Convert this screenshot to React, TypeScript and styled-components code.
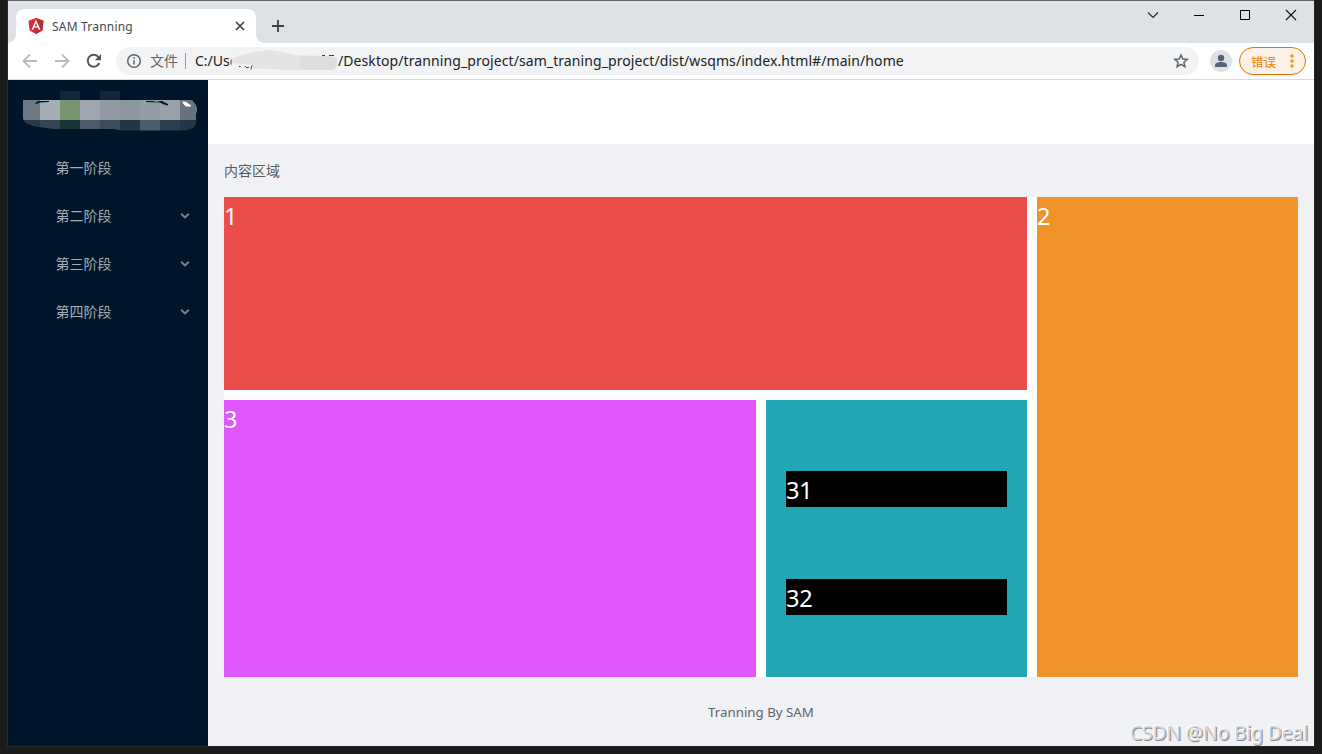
import React from "react";
import styled, { createGlobalStyle } from "styled-components";

const Global = createGlobalStyle`
  * { box-sizing: border-box; }
  html, body { margin: 0; height: 754px; overflow: hidden; background: #1b1b1b; }
  body { font-family: "Noto Sans", "Noto Sans CJK SC", sans-serif; }
`;

const Desktop = styled.div`
  position: relative;
  width: 1322px;
  height: 754px;
  padding: 0 8px 8px;
  background: #1b1b1b;
`;
const Window = styled.div`
  height: 746px;
  border-top: 1px solid #636467;
  display: flex;
  flex-direction: column;
  background: #fff;
  box-shadow: 0 0 0 1px #272727;
`;
const TabStrip = styled.header`
  height: 42px;
  flex: none;
  display: flex;
  background: #dee1e6;
`;
const Tab = styled.div`
  position: relative;
  width: 240px;
  height: 34px;
  margin: 8px 0 0 8px;
  padding: 0 10px 0 11px;
  display: flex;
  align-items: center;
  background: #fff;
  border-radius: 8px 8px 0 0;
  &::before, &::after {
    content: "";
    position: absolute;
    bottom: 0;
    width: 8px;
    height: 8px;
  }
  &::before { left: -8px; background: radial-gradient(circle at 0 0, transparent 7.5px, #fff 8px); }
  &::after { right: -8px; background: radial-gradient(circle at 100% 0, transparent 7.5px, #fff 8px); }
`;
const TabTitle = styled.span`
  flex: 1;
  margin: 2px 0 0 7px;
  font-size: 12px;
  letter-spacing: 0.2px;
  line-height: 18px;
  color: #45494d;
`;
const NewTab = styled.div`
  margin: 18px 0 0 16px;
  height: 14px;
  line-height: 0;
`;
const WindowControls = styled.div`
  margin: 8px 17px 0 auto;
  height: 12px;
  display: flex;
  gap: 34px;
`;
const Toolbar = styled.div`
  height: 37px;
  flex: none;
  display: flex;
  align-items: center;
  padding: 0 8px 0 14px;
  border-bottom: 1px solid #d9dadb;
  background: #fff;
`;
const NavButtons = styled.div`
  display: flex;
  gap: 16px;
  margin-right: 14px;
  line-height: 0;
`;
const AddressBar = styled.div`
  position: relative;
  width: 1083px;
  height: 28px;
  padding: 0 10px;
  display: flex;
  align-items: center;
  border-radius: 14px;
  background: #f1f3f4;
  font-size: 14px;
  line-height: 20px;
  white-space: nowrap;
  color: #202124;
`;
const Scheme = styled.span`
  width: 36px;
  margin-left: 8px;
  border-right: 1px solid #9a9da1;
  height: 16px;
  line-height: 16px;
  color: #5f6368;
`;
const UrlStart = styled.span`
  width: 143px;
  margin-left: 9px;
`;
const UrlRest = styled.span`
  flex: 1;
  letter-spacing: 0.085px;
`;
const UrlMask = styled.svg`
  position: absolute;
  left: 114px;
  top: 2px;
`;
const Avatar = styled.div`
  width: 22px;
  height: 22px;
  margin: 0 7px 0 11px;
  border-radius: 50%;
  background: #dee1e6;
  line-height: 0;
`;
const ErrorPill = styled.div`
  width: 67px;
  height: 28px;
  padding: 0 11px 0 11px;
  display: flex;
  align-items: center;
  justify-content: space-between;
  border: 1px solid #e37400;
  border-radius: 14px;
  background: #fcf1e8;
  color: #ea8000;
  font-size: 12.5px;
`;
const Page = styled.div`
  flex: 1;
  display: flex;
  min-height: 0;
`;
const Sidebar = styled.aside`
  width: 200px;
  background: #001529;
`;
const Brand = styled.div`
  height: 64px;
  line-height: 0;
`;
const Menu = styled.nav`
  display: flex;
  flex-direction: column;
  gap: 8px;
  padding-top: 4px;
`;
const MenuItem = styled.div`
  height: 40px;
  padding: 0 18px 0 47.5px;
  display: flex;
  align-items: center;
  justify-content: space-between;
  font-size: 14px;
  line-height: 20px;
  color: #a6adb4;
`;
const Main = styled.main`
  flex: 1;
  display: flex;
  flex-direction: column;
  background: #f0f1f5;
`;
const PageHeader = styled.div`
  height: 64px;
  background: #fff;
`;
const Content = styled.section`
  padding: 0 16px;
`;
const ContentTitle = styled.div`
  height: 53px;
  line-height: 53px;
  font-size: 14px;
  color: #595b5e;
`;
const Board = styled.div`
  display: grid;
  grid-template-columns: 532px 261px 261px;
  grid-template-rows: 193px 277px;
  gap: 10px;
  background: #fff;
  color: #fff;
  font-size: 23.5px;
  letter-spacing: -0.3px;
  line-height: 39px;
`;
const Tile = styled.div<{ $color: string; $wide?: boolean; $tall?: boolean }>`
  background: ${(p) => p.$color};
  grid-column: ${(p) => (p.$wide ? "span 2" : "auto")};
  grid-row: ${(p) => (p.$tall ? "span 2" : "auto")};
`;
const NestedTile = styled(Tile)`
  display: flex;
  flex-direction: column;
  gap: 72px;
  padding: 71px 20px 0;
`;
const Bar = styled.div`
  height: 36px;
  background: #000;
`;
const Footer = styled.footer`
  margin-top: 24px;
  text-align: center;
  font-size: 13.3px;
  line-height: 22px;
  color: #626467;
`;
const Watermark = styled.div`
  position: absolute;
  right: 14px;
  bottom: 7px;
  font-size: 19.5px;
  letter-spacing: -0.25px;
  line-height: 28px;
  white-space: nowrap;
  color: #d2d2d4;
  text-shadow: -1px -1px 0 #fff, 1px 1px 0 #8a8a8a;
`;

const AngularLogo = () => (
  <svg width="18" height="18" viewBox="0 0 18 18">
    <path d="M9 1 16.5 3.7 15.4 13.5 9 17 2.6 13.5 1.5 3.7Z" fill="#dd2b37" />
    <path d="M9 1 16.5 3.7 15.4 13.5 9 17Z" fill="#b52e31" />
    <path d="M9 2.8 4.5 12.8h1.7l.9-2.2h3.8l.9 2.2h1.7ZM9 6l1.3 3.2H7.7Z" fill="#fff" fillRule="evenodd" />
  </svg>
);

const Chevron = () => (
  <svg width="10" height="8" viewBox="0 0 10 8" fill="none" stroke="#77828d" strokeWidth="2">
    <path d="M1.2 1.7 5 5.4 8.8 1.7" />
  </svg>
);

const topRow = ["#6c7883", "#a5adb7", "#78936f", "#9ea7b0", "#919aa4", "#8a979f", "#929ca5", "#98a1aa", "#67747f"];
const bottomRow = ["#293a4a", "#344554", "#1a3337", "#4d5b69", "#3d4e5b", "#233648", "#4d5c69", "#2b3e4d", "#243648"];

const BrandMosaic = () => (
  <svg width="200" height="64" viewBox="0 0 200 64">
    <defs>
      <clipPath id="brush">
        <path d="M15 20H184L188 25 189 28V32L188 33V44L185 48 178 50.6H114L105 49H45L31 47 25 46 18 43 15 39Z" />
      </clipPath>
    </defs>
    <path d="M52 11h20v9H52zM92 11h20v9H92z" fill="#132638" />
    <g clipPath="url(#brush)" shapeRendering="crispEdges">
      {topRow.map((c, i) => (
        <rect key={i} x={12 + i * 20} y="20" width="20" height="20" fill={c} />
      ))}
      {bottomRow.map((c, i) => (
        <rect key={i} x={12 + i * 20} y="40" width="20" height="11" fill={c} />
      ))}
    </g>
    <path d="M27 23.5 30 21h11v1l-9 .5-4 1.5zM138 21h16l6 3v1.500l-4-1-4-2-14-.5z" fill="#001529" />
    <path d="M144 22l5-.6 3 .6zM174.500 21.500l3.500.3 5 3.700v1h-5l-3-3z" fill="#fff" />
  </svg>
);

const stages = [
  { label: "第一阶段", nested: false },
  { label: "第二阶段", nested: true },
  { label: "第三阶段", nested: true },
  { label: "第四阶段", nested: true },
];

const arrow = "M15 8H2M8 1.500 1.500 8 8 14.500";

export default function App() {
  return (
    <Desktop>
      <Global />
      <Window>
        <TabStrip>
          <Tab>
            <AngularLogo />
            <TabTitle>SAM Tranning</TabTitle>
            <svg width="12" height="12" viewBox="0 0 12 12" stroke="#3c4043" strokeWidth="1.7">
              <path d="M2 2 10 10M10 2 2 10" />
            </svg>
          </Tab>
          <NewTab>
            <svg width="12" height="14" viewBox="0 0 12 14" stroke="#3c4043" strokeWidth="1.8">
              <path d="M6 1V13M0 7H12" />
            </svg>
          </NewTab>
          <WindowControls>
            <svg width="12" height="12" viewBox="0 0 12 12" fill="none" stroke="#222" strokeWidth="1.100">
              <path d="M1 3.500 6 8.500 11 3.500" />
            </svg>
            <svg width="12" height="12" viewBox="0 0 12 12" stroke="#000">
              <path d="M1 6.500H11" />
            </svg>
            <svg width="12" height="12" viewBox="0 0 12 12" fill="none" stroke="#000">
              <path d="M1.500 1.500H10.500V10.500H1.500Z" />
            </svg>
            <svg width="12" height="12" viewBox="0 0 12 12" stroke="#111" strokeWidth="1.100">
              <path d="M1 1 11 11M11 1 1 11" />
            </svg>
          </WindowControls>
        </TabStrip>
        <Toolbar>
          <NavButtons>
            <svg width="16" height="16" viewBox="0 0 16 16" fill="none" stroke="#b9bbbd" strokeWidth="1.800">
              <path d={arrow} />
            </svg>
            <svg width="16" height="16" viewBox="0 0 16 16" fill="none" stroke="#b9bbbd" strokeWidth="1.800">
              <path d={arrow} transform="translate(16 0) scale(-1 1)" />
            </svg>
            <svg width="16" height="16" viewBox="0 0 16 16">
              <path d="M13.300 10A6 6 0 1 1 12.300 3.800L14 5.500" fill="none" stroke="#55585c" strokeWidth="2" />
              <path d="M15 1V7.200H8.800Z" fill="#55585c" />
            </svg>
          </NavButtons>
          <AddressBar>
            <svg width="16" height="16" viewBox="0 0 16 16" fill="none" stroke="#5f6368" strokeWidth="1.500">
              <circle cx="8" cy="8" r="6.300" />
              <path d="M8 7.200V11.500M8 4.300V6" />
            </svg>
            <Scheme>文件</Scheme>
            <UrlStart>C:/Users/</UrlStart>
            <UrlRest>/Desktop/tranning_project/sam_traning_project/dist/wsqms/index.html#/main/home</UrlRest>
            <UrlMask width="110" height="24" viewBox="0 0 110 24">
              <path d="M1.500 2H40V22H1.500Z" fill="#f1f3f4" />
              <path d="M2 10 12 6 24 3 40 1 52 3 64 6 98 7 107 9 107 16 104 21H60L38 20H24L22 16 12 15 2 14Z" fill="#e3e4e6" />
              <path d="M70 7H98L107 9V16L104 21H70Z" fill="#dddee0" />
              <path d="M9 17.500h1.500M15 17l2 2 2-1M22 16.500 20.800 20.500M92 6.500h3M99 6.500h5" stroke="#3c4043" fill="none" />
            </UrlMask>
            <svg width="16" height="16" viewBox="0 0 16 16" fill="none" stroke="#5f6368" strokeWidth="1.500">
              <path d="M8 2 9.800 6 14.200 6.400 10.900 9.300 11.900 13.600 8 11.300 4.100 13.600 5.100 9.300 1.800 6.400 6.200 6Z" />
            </svg>
          </AddressBar>
          <Avatar>
            <svg width="22" height="22" viewBox="0 0 22 22" fill="#556379">
              <circle cx="11" cy="8" r="3.200" />
              <path d="M5 17V15C5 12.800 9 12 11 12S17 12.800 17 15V17Z" />
            </svg>
          </Avatar>
          <ErrorPill>
            错误
            <svg width="4" height="14" viewBox="0 0 4 14" fill="#f29900">
              <circle cx="2" cy="2" r="1.700" />
              <circle cx="2" cy="7" r="1.700" />
              <circle cx="2" cy="12" r="1.700" />
            </svg>
          </ErrorPill>
        </Toolbar>
        <Page>
          <Sidebar>
            <Brand>
              <BrandMosaic />
            </Brand>
            <Menu>
              {stages.map((s) => (
                <MenuItem key={s.label}>
                  {s.label}
                  {s.nested && <Chevron />}
                </MenuItem>
              ))}
            </Menu>
          </Sidebar>
          <Main>
            <PageHeader />
            <Content>
              <ContentTitle>内容区域</ContentTitle>
              <Board>
                <Tile $color="#eb4d4b" $wide>1</Tile>
                <Tile $color="#f0932b" $tall>2</Tile>
                <Tile $color="#e056fd">3</Tile>
                <NestedTile $color="#22a6b3">
                  <Bar>31</Bar>
                  <Bar>32</Bar>
                </NestedTile>
              </Board>
            </Content>
            <Footer>Tranning By SAM</Footer>
          </Main>
        </Page>
      </Window>
      <Watermark>CSDN @No Big Deal</Watermark>
    </Desktop>
  );
}
